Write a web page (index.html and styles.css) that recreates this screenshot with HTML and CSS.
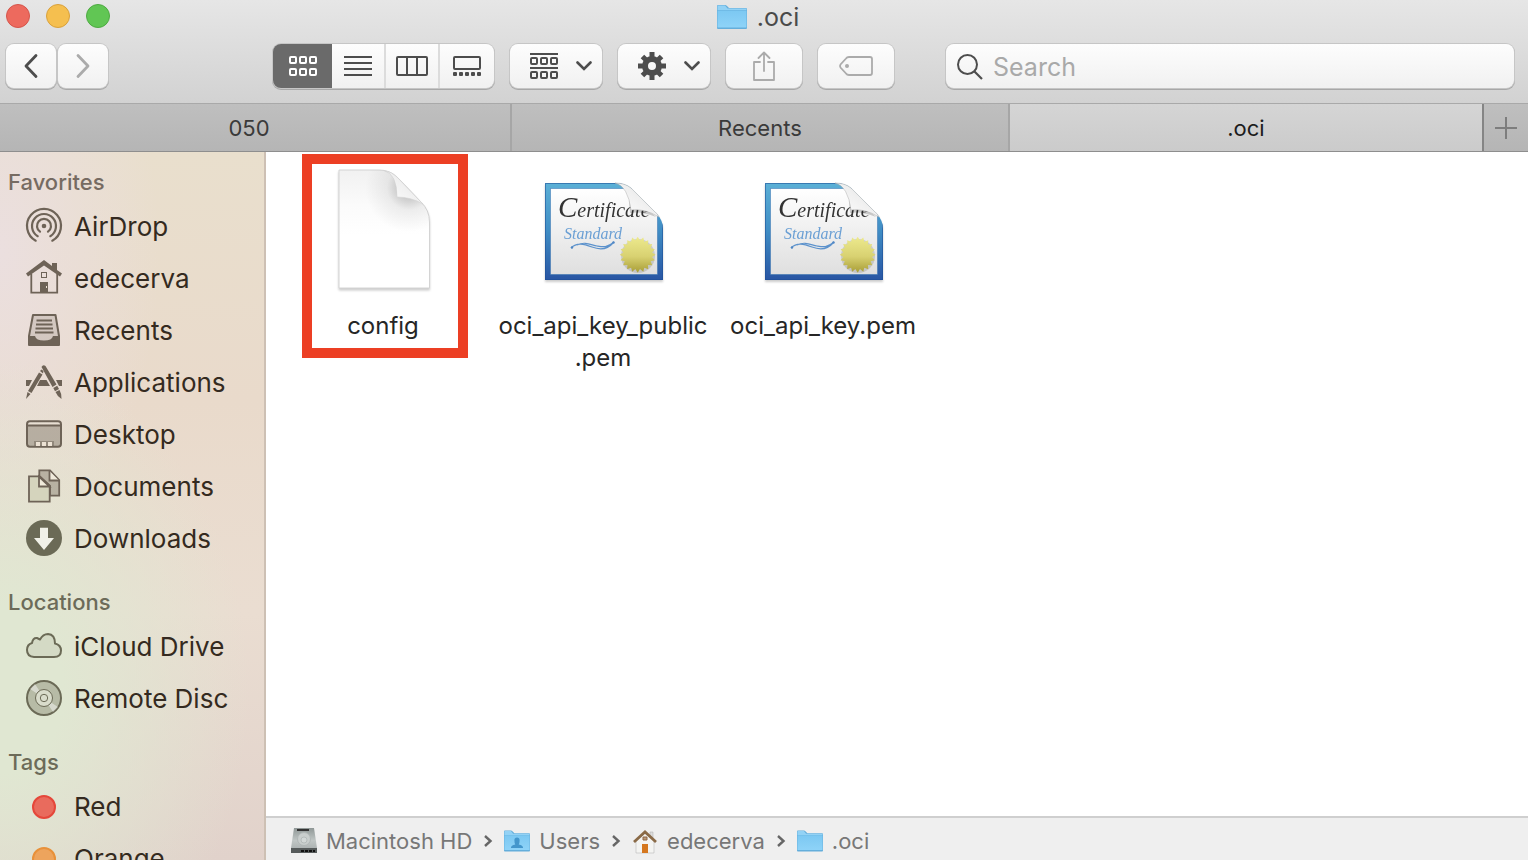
FILE: index.html
```
<!DOCTYPE html>
<html lang="en">
<head>
<meta charset="utf-8">
<title>.oci</title>
<link rel="stylesheet" href="styles.css">
</head>
<body>
<svg class="defs" aria-hidden="true">
  <defs>
    <linearGradient id="folderFill" x1="0" y1="0" x2="0" y2="1"><stop offset="0" stop-color="#7cc8f2"/><stop offset="1" stop-color="#8ed3f8"/></linearGradient>
    <linearGradient id="pageShade" x1="0" y1="0" x2="0" y2="1"><stop offset="0" stop-color="#f1f1f1"/><stop offset=".3" stop-color="#fbfbfb"/><stop offset=".55" stop-color="#fff"/></linearGradient>
    <radialGradient id="foldShade" gradientUnits="userSpaceOnUse" cx="90" cy="22" r="44"><stop offset=".2" stop-color="#000" stop-opacity=".2"/><stop offset=".5" stop-color="#000" stop-opacity=".06"/><stop offset="1" stop-color="#000" stop-opacity="0"/></radialGradient>
    <linearGradient id="foldFill" x1="0" y1="1" x2="1" y2="0"><stop offset="0" stop-color="#fff"/><stop offset="1" stop-color="#e2e2e2"/></linearGradient>
    <linearGradient id="certFrame" x1="0" y1="0" x2="0" y2="1"><stop offset="0" stop-color="#5bb0d6"/><stop offset=".5" stop-color="#3f8cc4"/><stop offset="1" stop-color="#2855a3"/></linearGradient>
    <linearGradient id="certPaper" x1="0" y1="0" x2="0" y2="1"><stop offset="0" stop-color="#fff"/><stop offset="1" stop-color="#dfdfdf"/></linearGradient>
    <linearGradient id="sealFill" x1="0" y1="0" x2="0" y2="1"><stop offset="0" stop-color="#eeeb8f"/><stop offset=".55" stop-color="#d8d171"/><stop offset="1" stop-color="#a59a32"/></linearGradient>
    <linearGradient id="diskFill" x1="0" y1="0" x2="0" y2="1"><stop offset="0" stop-color="#8f9796"/><stop offset=".5" stop-color="#c0c6c5"/><stop offset="1" stop-color="#a2a8a8"/></linearGradient>
    <clipPath id="certClip"><path d="M6 17H76Q86 17 92 22L117 47Q124 54 124 63V114H6Z"/></clipPath>
    <path id="ray" d="M0 -18L2.800 -13.500V13.500L0 18L-2.800 13.500V-13.500Z"/>
    <clipPath id="sealClip">
      <circle r="14.200"/>
      <use href="#ray"/>
      <use href="#ray" transform="rotate(18)"/>
      <use href="#ray" transform="rotate(36)"/>
      <use href="#ray" transform="rotate(54)"/>
      <use href="#ray" transform="rotate(72)"/>
      <use href="#ray" transform="rotate(90)"/>
      <use href="#ray" transform="rotate(108)"/>
      <use href="#ray" transform="rotate(126)"/>
      <use href="#ray" transform="rotate(144)"/>
      <use href="#ray" transform="rotate(162)"/>
    </clipPath>
  </defs>
  <symbol id="folder" viewBox="0 0 30 26">
    <path d="M0 2Q0 1 1 1H8Q9 1 10 2L12 4H29Q30 4 30 5V24Q30 25 29 25H1Q0 25 0 24Z" fill="#64aedb"/>
    <path d="M.5 2Q.5 1.500 1 1.500H8L10.500 4.500H29.500V6H.5Z" fill="#93d2f5"/>
    <path d="M.5 6.500H29.500V23.500H.5Z" fill="url(#folderFill)"/>
  </symbol>
  <symbol id="squares" viewBox="0 0 28 20">
    <g fill="none" stroke="currentColor" stroke-width="2"><rect x="1" y="1" width="6" height="6" rx="1"/><rect x="11" y="1" width="6" height="6" rx="1"/><rect x="21" y="1" width="6" height="6" rx="1"/><rect x="1" y="13" width="6" height="6" rx="1"/><rect x="11" y="13" width="6" height="6" rx="1"/><rect x="21" y="13" width="6" height="6" rx="1"/></g>
  </symbol>
  <symbol id="chevron" viewBox="0 0 16 10"><path d="M1.500 1.500L8 8L14.500 1.500" fill="none" stroke="currentColor" stroke-width="2.600" stroke-linecap="round"/></symbol>
  <symbol id="step" viewBox="0 0 10 14"><path d="M2 2L7.500 7L2 12" fill="none" stroke="currentColor" stroke-width="2.400"/></symbol>
  <symbol id="certificate" viewBox="0 0 128 128">
    <g clip-path="url(#certClip)">
      <rect x="6" y="17" width="118" height="97" fill="url(#certFrame)"/>
      <rect x="6.500" y="17.500" width="117" height="96" fill="none" stroke="#1d4f96" stroke-opacity=".55"/>
      <rect x="11.500" y="22.500" width="107" height="86" fill="url(#certPaper)" stroke="#2f6dae" stroke-opacity=".5"/>
      <text x="19" y="51" class="cert-title"><tspan class="cap">C</tspan>ertificate</text>
      <text x="25" y="73" class="cert-kind">Standard</text>
      <path d="M32 82C38 76 45 78 53 81S68 84 74 77M38 79C46 75 52 79 58 80S68 82 75 76" fill="none" stroke="#5c92cc" stroke-width="1.200"/>
      <circle cx="33" cy="81.500" r="1.200" fill="#4f86c4"/><circle cx="74.500" cy="76.500" r="1.200" fill="#4f86c4"/>
      <circle cx="99" cy="90" r="17" fill="#555" opacity=".2"/>
      <g transform="translate(98.700 88.700)"><rect x="-19" y="-19" width="38" height="38" fill="url(#sealFill)" clip-path="url(#sealClip)"/></g>
      <path d="M92 44Q91 31 91 22L118 48Q103 42 92 44" fill="#000" opacity=".18" transform="translate(-1 3)"/>
    </g>
    <path d="M76 17Q89 20 92 44Q105 42 120 51Q118 47 116 46L92 22Q86 17 76 17Z" fill="url(#foldFill)" stroke="#aaa" stroke-width=".5"/>
  </symbol>
</svg>

<div class="window">
  <header class="titlebar">
    <div class="title-row">
      <div class="lights">
        <button class="light close" aria-label="Close"></button>
        <button class="light minimize" aria-label="Minimize"></button>
        <button class="light zoom" aria-label="Zoom"></button>
      </div>
      <h1 class="title"><svg class="title-icon" viewBox="0 0 30 26"><use href="#folder"/></svg>.oci</h1>
    </div>
    <div class="toolbar">
      <div class="history">
        <button class="btn nav" aria-label="Back"><svg width="14" height="24" viewBox="0 0 14 24"><path d="M12 1.500L2 12L12 22.500" fill="none" stroke="currentColor" stroke-width="2.800" stroke-linecap="round" stroke-linejoin="round"/></svg></button>
        <button class="btn nav dim" aria-label="Forward"><svg width="14" height="24" viewBox="0 0 14 24"><path d="M2 1.500L12 12L2 22.500" fill="none" stroke="currentColor" stroke-width="2.800" stroke-linecap="round" stroke-linejoin="round"/></svg></button>
      </div>
      <div class="tools">
        <div class="views">
          <button class="view on" aria-label="Icon view"><svg width="28" height="20"><use href="#squares"/></svg></button>
          <button class="view list" aria-label="List view"><svg width="28" height="20"><path d="M0 1H28M0 7H28M0 13H28M0 19H28" stroke="currentColor" stroke-width="2"/></svg></button>
          <button class="view" aria-label="Column view"><svg width="32" height="20"><rect x="1" y="1" width="30" height="18" rx="1" fill="none" stroke="currentColor" stroke-width="2"/><path d="M11 1V19M21 1V19" stroke="currentColor" stroke-width="2"/></svg></button>
          <button class="view gallery" aria-label="Gallery view"><svg width="28" height="20"><rect x="1" y="1" width="26" height="12" rx="1" fill="none" stroke="currentColor" stroke-width="2"/><g fill="currentColor"><rect y="16" width="4" height="4" rx="1"/><rect x="6" y="16" width="4" height="4" rx="1"/><rect x="12" y="16" width="4" height="4" rx="1"/><rect x="18" y="16" width="4" height="4" rx="1"/><rect x="24" y="16" width="4" height="4" rx="1"/></g></svg></button>
        </div>
        <button class="btn menu" aria-label="Group items">
          <svg width="28" height="26"><g fill="none" stroke="currentColor" stroke-width="2"><path d="M0 1H28M0 15H28"/><rect x="1" y="5" width="6" height="6" rx="1"/><rect x="11" y="5" width="6" height="6" rx="1"/><rect x="21" y="5" width="6" height="6" rx="1"/><rect x="1" y="19" width="6" height="6" rx="1"/><rect x="11" y="19" width="6" height="6" rx="1"/><rect x="21" y="19" width="6" height="6" rx="1"/></g></svg>
          <svg width="16" height="10"><use href="#chevron"/></svg>
        </button>
        <button class="btn menu" aria-label="Actions">
          <svg width="28" height="28" viewBox="-14 -14 28 28"><circle r="7" fill="none" stroke="currentColor" stroke-width="6"/><g stroke="currentColor" stroke-width="5"><path d="M0 -14V-8M0 8V14M-14 0H-8M8 0H14"/><path d="M0 -13.500V-8M0 8V13.500M-13.500 0H-8M8 0H13.500" transform="rotate(45)"/></g></svg>
          <svg width="16" height="10"><use href="#chevron"/></svg>
        </button>
        <button class="btn wide dim" aria-label="Share"><svg width="24" height="30" viewBox="0 0 24 30"><path d="M8 11H2V29H22V11H16M12 20V1.500M6.500 7L12 1.500L17.500 7" fill="none" stroke="currentColor" stroke-width="1.800" stroke-linejoin="round" stroke-linecap="round"/></svg></button>
        <button class="btn wide dim" aria-label="Edit tags"><svg width="34" height="20" viewBox="0 0 34 20"><path d="M10 1H31Q33 1 33 3V17Q33 19 31 19H10Q8 19 7 17.500L1.500 11.500Q.5 10 1.500 8.500L7 2.500Q8 1 10 1Z" fill="none" stroke="currentColor" stroke-width="1.800"/><circle cx="8" cy="10" r="2" fill="currentColor"/></svg></button>
      </div>
      <label class="search"><svg width="26" height="26" viewBox="0 0 26 26"><circle cx="10.500" cy="10.500" r="9.500" fill="none" stroke="currentColor" stroke-width="2"/><path d="M17.500 17.500L25 25" stroke="currentColor" stroke-width="2.200"/></svg><input type="text" placeholder="Search" aria-label="Search"></label>
    </div>
  </header>

  <nav class="tabs" aria-label="Tabs">
    <button class="tab first">050</button>
    <button class="tab second">Recents</button>
    <button class="tab third current">.oci</button>
    <button class="add" aria-label="New tab"><svg width="22" height="22"><path d="M0 11H22M11 0V22" stroke="currentColor" stroke-width="2"/></svg></button>
  </nav>

  <div class="body">
    <aside class="sidebar">
      <h2>Favorites</h2>
      <a href="#airdrop"><svg viewBox="0 0 36 36"><g fill="none" stroke="currentColor" stroke-width="2.200" stroke-linecap="round"><path d="M9.700 31.700A17 17 0 1 1 26.300 31.700"/><path d="M11.700 27.200A12 12 0 1 1 24.300 27.200"/><path d="M14 22.700A7 7 0 1 1 22 22.700"/></g><circle cx="18" cy="17" r="2.300" fill="currentColor"/></svg>AirDrop</a>
      <a href="#home"><svg viewBox="0 0 36 36"><path d="M5.300 13V31.700H31.200V13" fill="none" stroke="currentColor" stroke-width="1.800"/><path d="M0 12.500L18 -1L26 5V2H31V9L36 12.500L34 15.500L18 4.500L2 15.500Z" fill="currentColor"/><rect x="15.500" y="11.500" width="5" height="5" fill="none" stroke="currentColor"/><path d="M14 21H22V32H14Z" fill="currentColor"/><rect x="20" y="25" width="1" height="2" fill="#eee2d4"/></svg>edecerva</a>
      <a href="#recents"><svg viewBox="0 0 36 36"><path d="M7 2H29.500L33 23V32H3V23Z" fill="currentColor" fill-opacity=".18" stroke="currentColor" stroke-width="2" stroke-linejoin="round"/><path d="M10.500 7.500H26M10 11.500H26.500M9.500 15.500H27M9 19.500H27.500" stroke="currentColor" stroke-width="1.800"/><path d="M3 23H9Q10 27.500 18 27.500T27 23H33V32H3Z" fill="currentColor"/></svg>Recents</a>
      <a href="#applications"><svg viewBox="0 0 36 36"><g fill="currentColor"><path d="M0 15H6L3 21H0ZM14 15H20.500L24 21H11ZM30 15H36V21H33Z"/><path d="M13 7.500L16.500 9.500L5.500 28L2 26ZM1.500 27L4.500 29L0 34ZM14 6L15.500 4.500L17.500 6L17 8.500Z"/><path d="M15.500 2Q17 -1 19.500 1L30.500 19.500L26.500 22ZM27.300 23L31.200 20.700L33 24L29 26.200ZM29.500 27L33.500 25Q36 29 35.500 34Q31 31 29.500 27Z"/></g></svg>Applications</a>
      <a href="#desktop"><svg viewBox="0 0 36 36"><rect x="1" y="4.300" width="34" height="25.500" rx="3" fill="none" stroke="currentColor" stroke-width="2"/><path d="M1 8H35V30H1Z" fill="currentColor" fill-opacity=".4"/><path d="M1 8.500H35" stroke="currentColor" stroke-width="2"/><path d="M8 24H28V29H8Z" fill="currentColor" fill-opacity=".5"/><path d="M10 25H14V29H10ZM16 25H20V29H16ZM22 25H26V29H22Z" fill="#ece2d4"/></svg>Desktop</a>
      <a href="#documents"><svg viewBox="0 0 36 36"><path d="M13.300 7V1.300H24L33.200 11V26.700H24V17L13.300 7Z" fill="currentColor" fill-opacity=".38" stroke="currentColor" stroke-width="1.800"/><path d="M23.500 2V11.500H33" fill="#f0eadb" stroke="currentColor" stroke-width="1.800"/><path d="M3 7.300H13.500L23.700 17V32.700H3Z" fill="#d5d4bd" stroke="currentColor" stroke-width="1.800"/><path d="M13 7.500V17.500H23.500Z" fill="#f0eadb" stroke="currentColor" stroke-width="1.800"/></svg>Documents</a>
      <a class="cool" href="#downloads"><svg viewBox="0 0 36 36"><circle cx="18" cy="17" r="18" fill="currentColor"/><path d="M14 6.700H22V17H28L18 29L8 17H14Z" fill="#f1f1e8"/></svg>Downloads</a>
      <h2>Locations</h2>
      <a class="cool" href="#icloud"><svg viewBox="0 0 36 36"><path d="M8 28Q1 27.500 1 21Q1 15.500 6 14Q7 8.500 11 9L14 10.500Q17 5 22 5Q29 5.500 29 14.500Q35 16 35 21.500Q35 28 28 28Z" fill="currentColor" fill-opacity=".1" stroke="currentColor" stroke-width="2" stroke-linejoin="round"/></svg>iCloud Drive</a>
      <a class="cool" href="#disc"><svg viewBox="0 0 36 36"><circle cx="18" cy="17" r="17" fill="currentColor" fill-opacity=".35" stroke="currentColor" stroke-width="2"/><path d="M18 17L4 8L9 3ZM18 17L32 26L27 31Z" fill="#fff" fill-opacity=".45"/><circle cx="18" cy="17" r="8.500" fill="#d9dccb" stroke="currentColor"/><circle cx="18" cy="17" r="3.700" fill="#d9dccb" stroke="currentColor"/></svg>Remote Disc</a>
      <h2>Tags</h2>
      <a href="#red"><span class="tag red"></span>Red</a>
      <a href="#orange"><span class="tag orange"></span>Orange</a>
    </aside>

    <div class="pane">
      <main class="files">
        <a class="file marked" href="#config">
          <svg class="file-icon" viewBox="0 0 128 128">
            <path d="M20 4H60Q71 4 78 11L102 36Q110.500 44 110.500 56V122H20Z" fill="url(#pageShade)" stroke="#d4d4d4"/>
            <path d="M20 4H60Q71 4 78 11L102 36Q110.500 44 110.500 56V122H20Z" fill="url(#foldShade)"/>
            <path d="M65 4.500Q78 8 78 31Q92 31 104 38L101 35L78 11Q73 6 65 4.500Z" fill="url(#foldFill)" stroke="#d2d2d2" stroke-width=".6"/>
          </svg>
          <span class="name">config</span>
        </a>
        <a class="file" href="#public"><svg class="file-icon"><use href="#certificate"/></svg><span class="name">oci_api_key_public<br>.pem</span></a>
        <a class="file" href="#private"><svg class="file-icon"><use href="#certificate"/></svg><span class="name">oci_api_key.pem</span></a>
      </main>
      <footer class="path">
        <a href="#hd"><svg viewBox="0 0 26 26"><path d="M3 0H23L26 20V24Q26 25 25 25H1Q0 25 0 24V20Z" fill="url(#diskFill)"/><path d="M0 20H26V25H0Z" fill="#565b5b"/><path d="M6 2H18" stroke="#333" stroke-width="2"/><circle cx="13" cy="11" r="6.500" fill="#c9cecd" stroke="#b0b6b6"/><circle cx="13" cy="12" r="3" fill="#d3d8d7" stroke="#a5abab" stroke-width=".6"/><path d="M10 23H24" stroke="#111" stroke-width="2" stroke-dasharray="3 1"/></svg>Macintosh HD</a>
        <svg class="sep"><use href="#step"/></svg>
        <a href="#users"><svg viewBox="0 0 30 26"><use href="#folder"/><path d="M8 21Q8 18 13 17Q12 15 12 12Q12 9 15 9T18 12Q18 15 17 17Q22 18 22 21Z" fill="#4396cc"/></svg>Users</a>
        <svg class="sep"><use href="#step"/></svg>
        <a href="#edecerva"><svg viewBox="0 0 26 26"><path d="M4 12L13 4L22 12V25H4Z" fill="#f4f4f2" stroke="#bbb" stroke-width=".6"/><path d="M18 4H21V10L18 7Z" fill="#ddd" stroke="#aaa" stroke-width=".5"/><path d="M2 14L13 4L24 14" fill="none" stroke="#8a6a47" stroke-width="2.800"/><path d="M10 16H16V25H10Z" fill="#d5771f"/><path d="M11 9H15V12H11Z" fill="#b99b7a" stroke="#8f6542"/></svg>edecerva</a>
        <svg class="sep"><use href="#step"/></svg>
        <a href="#oci"><svg viewBox="0 0 30 26"><use href="#folder"/></svg>.oci</a>
      </footer>
    </div>
  </div>
</div>
</body>
</html>
```
FILE: styles.css
```
*, *::before, *::after { box-sizing: border-box; }
body {
  margin: 0;
  font-family: Inter, "Liberation Sans", sans-serif;
  color: #262626;
  background: #fff;
}
button { border: 0; padding: 0; margin: 0; font: inherit; color: inherit; background: none; }
a { color: inherit; text-decoration: none; }
svg { display: block; flex: none; overflow: visible; }
.defs { position: absolute; width: 0; height: 0; }

.window { display: flex; flex-direction: column; height: 100vh; overflow: hidden; }

.titlebar { flex: none; background: linear-gradient(#e6e6e6, #d2d2d2); }
.title-row {
  display: grid;
  grid-template-columns: 1fr auto 1fr;
  align-items: center;
  height: 34px;
  padding: 0 18px 0 6px;
}
.lights { display: flex; gap: 16px; padding-bottom: 2px; }
.light { width: 24px; height: 24px; border-radius: 50%; border: 1px solid; }
.close { background: #ed6a5e; border-color: #d5554b; }
.minimize { background: #f5bf4f; border-color: #d9a13c; }
.zoom { background: #61c654; border-color: #4eaa42; }
.title {
  display: flex;
  align-items: center;
  gap: 10px;
  margin: 0;
  font-size: 25px;
  line-height: 32px;
  font-weight: 400;
  color: #4a4a4a;
}
.title-icon { width: 30px; height: 26px; }

.toolbar { display: flex; align-items: center; height: 69px; padding: 0 14px 5px 6px; }
.history { display: flex; gap: 2px; width: 267px; }
.btn, .search, .views {
  height: 44px;
  border-radius: 8px;
  box-shadow: 0 0 0 1px #c6c6c6, 0 1px 0 1px #a8a8a8;
}
.btn, .search, .view {
  background: linear-gradient(#fdfdfd, #f1f1f1);
  color: #4d4d4d;
}
.btn { display: flex; align-items: center; justify-content: center; }
.nav { width: 50px; }
.btn.dim { color: #ababab; }
.tools { display: flex; gap: 16px; }
.views { display: flex; overflow: hidden; }
.view {
  display: flex;
  align-items: center;
  justify-content: center;
  width: 54px;
  border-left: 2px solid #dcdcdc;
}
.view.on { width: 59px; color: #fff; background: #6a6a6a; border: 0; }
.view.list { width: 52px; border: 0; }
.view.gallery { width: 56px; }
.menu { width: 92px; gap: 18px; padding-left: 10px; }
.wide { width: 76px; }
.search { display: flex; flex: 1; align-items: center; gap: 10px; margin-left: 52px; padding: 2px 10px 0 11px; }
.search input {
  flex: 1;
  min-width: 0;
  padding: 0;
  border: 0;
  outline: 0;
  background: none;
  font: 25px/32px Inter, "Liberation Sans", sans-serif;
  color: #333;
}
.search input::placeholder { color: #a9a9a9; opacity: 1; }

.tabs {
  display: flex;
  flex: none;
  height: 49px;
  border-top: 1px solid #a9a9a9;
  border-bottom: 1px solid #8e8e8e;
  background: linear-gradient(#bfbfbf, #b5b5b5);
  font-size: 22px;
  line-height: 28px;
  color: #3a3a3a;
}
.tab { flex-basis: 0; border-right: 2px solid #a6a6a6; }
.first { flex-grow: 512; text-indent: -12px; }
.second { flex-grow: 498; }
.third { flex-grow: 474; }
.tab.current { color: #1c1c1c; background: linear-gradient(#d5d5d5, #cbcbcb); border-color: #858585; }
.add { display: flex; align-items: center; justify-content: center; width: 44px; color: #7d7d7d; }

.body { display: flex; flex: 1; min-height: 0; }
.sidebar {
  flex: none;
  width: 266px;
  padding-top: 11px;
  overflow: hidden;
  border-right: 2px solid #cdc0b4;
  color: #342a20;
  background:
    radial-gradient(ellipse 250px 330px at 0 76%, #e0e7d2 25%, #e0e7d200),
    radial-gradient(ellipse 160px 300px at 0 14%, #ebdfdf, #ebdfdf00),
    linear-gradient(#e9dfcd 0, #e9dacb 35%, #eaddd1 65%, #e1d2cb 100%);
}
.sidebar h2 {
  margin: 18px 0 0;
  padding-left: 8px;
  font-size: 22px;
  line-height: 38px;
  font-weight: 500;
  color: #6c6b59;
}
.sidebar h2:first-child { margin-top: 0; color: #766b62; }
.sidebar a {
  display: flex;
  align-items: center;
  gap: 12px;
  height: 52px;
  padding-left: 26px;
  font-size: 26px;
  line-height: 32px;
  white-space: nowrap;
}
.sidebar svg { width: 36px; height: 36px; color: #6e6357; }
.sidebar .cool svg { color: #6b6a56; }
.tag { width: 24px; height: 24px; margin: 0 6px; border: 2px solid; border-radius: 50%; }
.red { background: #e96b5d; border-color: #e5473a; }
.orange { background: #eda45d; border-color: #e8913a; }

.pane { display: flex; flex: 1; flex-direction: column; min-width: 0; background: #fff; }
.files { display: flex; flex: 1; flex-wrap: wrap; align-content: flex-start; min-height: 0; padding: 14px 7px; }
.file { position: relative; display: flex; flex-direction: column; align-items: center; gap: 16px; width: 220px; }
.file-icon { width: 128px; height: 128px; filter: drop-shadow(0 2px 1px #0003); }
.name { font-size: 24px; line-height: 32px; text-align: center; }
.marked::after {
  content: "";
  position: absolute;
  top: -12px;
  left: 29px;
  width: 166px;
  height: 204px;
  border: 10px solid #ec3f24;
}
.cert-title { font: italic 20px "Liberation Serif", serif; fill: #333; }
.cap { font-size: 29px; }
.cert-kind { font: italic 16px "Liberation Serif", serif; fill: #6a9fd4; }

.path {
  display: flex;
  flex: none;
  align-items: center;
  gap: 11px;
  height: 44px;
  padding: 4px 25px 0;
  border-top: 2px solid #cfcfcf;
  background: #efefef;
  font-size: 22px;
  line-height: 28px;
  color: #777;
}
.path a { display: flex; align-items: center; gap: 9px; }
.path a svg { width: 26px; height: 26px; }
.sep { width: 10px; height: 14px; color: #666; }
```
